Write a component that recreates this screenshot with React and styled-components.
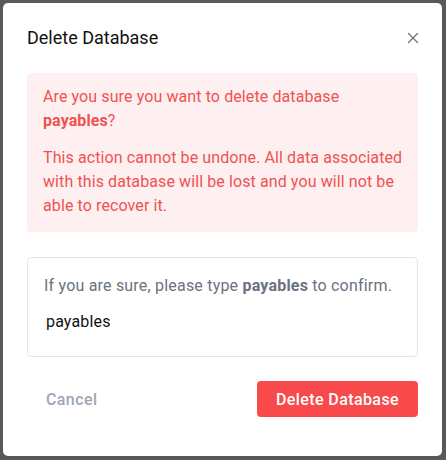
import React from "react";
import styled, { createGlobalStyle } from "styled-components";

const Global = createGlobalStyle`
  html, body { margin: 0; padding: 0; }
  body {
    background: #595959;
    font-family: Roboto, "Noto Sans", sans-serif;
    -webkit-font-smoothing: antialiased;
  }
  * { box-sizing: border-box; }
`;

const Backdrop = styled.div`
  width: 446px;
  height: 460px;
  padding: 3px 4px 4px 3px;
  background: #595959;
`;

const Modal = styled.div`
  width: 439px;
  height: 453px;
  background: #fff;
  border-radius: 5px;
  padding: 21px 24px 0 24px;
  display: flex;
  flex-direction: column;
`;

const Header = styled.div`
  display: flex;
  align-items: center;
  justify-content: space-between;
  height: 28px;
`;

const Title = styled.h2`
  margin: 0;
  font-size: 18px;
  line-height: 28px;
  font-weight: 400;
  color: #111;
`;

const Close = styled.button`
  border: 0;
  background: none;
  padding: 0;
  width: 12px;
  height: 12px;
  margin-right: -1px;
  color: #6b7280;
  display: flex;
  cursor: pointer;
`;

const Alert = styled.div`
  margin-top: 21px;
  background: #fef0f0;
  border-radius: 4px;
  padding: 12px 12px 14px 16px;
  color: #f05252;
  font-size: 16px;
  line-height: 24px;
  letter-spacing: 0.1px;
`;

const AlertText = styled.p`
  margin: 0;
  & + & { margin-top: 13px; }
  strong { font-weight: 700; }
`;

const ConfirmBox = styled.div`
  margin-top: 25px;
  border: 1px solid #e2e5ea;
  border-radius: 4px;
  padding: 16px 16px 15px;
`;

const Label = styled.label`
  display: block;
  color: #6b7280;
  font-size: 16px;
  line-height: 24px;
  letter-spacing: 0.2px;
  strong { font-weight: 700; }
`;

const Input = styled.input`
  display: block;
  width: 100%;
  height: 40px;
  margin-top: 3px;
  border: 0;
  outline: none;
  padding: 0 2px;
  font-family: inherit;
  font-size: 16px;
  letter-spacing: 0.15px;
  color: #111;
  background: transparent;
`;

const Footer = styled.div`
  margin-top: 24px;
  display: flex;
  justify-content: space-between;
  align-items: center;
`;

const Button = styled.button`
  height: 36px;
  padding: 0 19px;
  border: 0;
  border-radius: 4px;
  font-family: inherit;
  font-size: 16px;
  font-weight: 500;
  letter-spacing: 0.4px;
  cursor: pointer;
  background: ${(p) => (p.$danger ? "#f84a4a" : "transparent")};
  color: ${(p) => (p.$danger ? "#fff" : "#a0a6b1")};
`;

export default function App() {
  return (
    <>
      <Global />
      <Backdrop>
        <Modal>
          <Header>
            <Title>Delete Database</Title>
            <Close aria-label="Close">
              <svg width="12" height="12" viewBox="0 0 12 12" fill="none">
                <path d="M1.5 1.5L10.5 10.5M10.5 1.5L1.5 10.5" stroke="currentColor" strokeWidth="1.3" strokeLinecap="round" />
              </svg>
            </Close>
          </Header>
          <Alert>
            <AlertText>
              Are you sure you want to delete database <strong>payables</strong>?
            </AlertText>
            <AlertText>
              This action cannot be undone. All data associated with this database will be lost and you will not be able to recover it.
            </AlertText>
          </Alert>
          <ConfirmBox>
            <Label htmlFor="confirm">
              If you are sure, please type <strong>payables</strong> to confirm.
            </Label>
            <Input id="confirm" defaultValue="payables" />
          </ConfirmBox>
          <Footer>
            <Button>Cancel</Button>
            <Button $danger>Delete Database</Button>
          </Footer>
        </Modal>
      </Backdrop>
    </>
  );
}
